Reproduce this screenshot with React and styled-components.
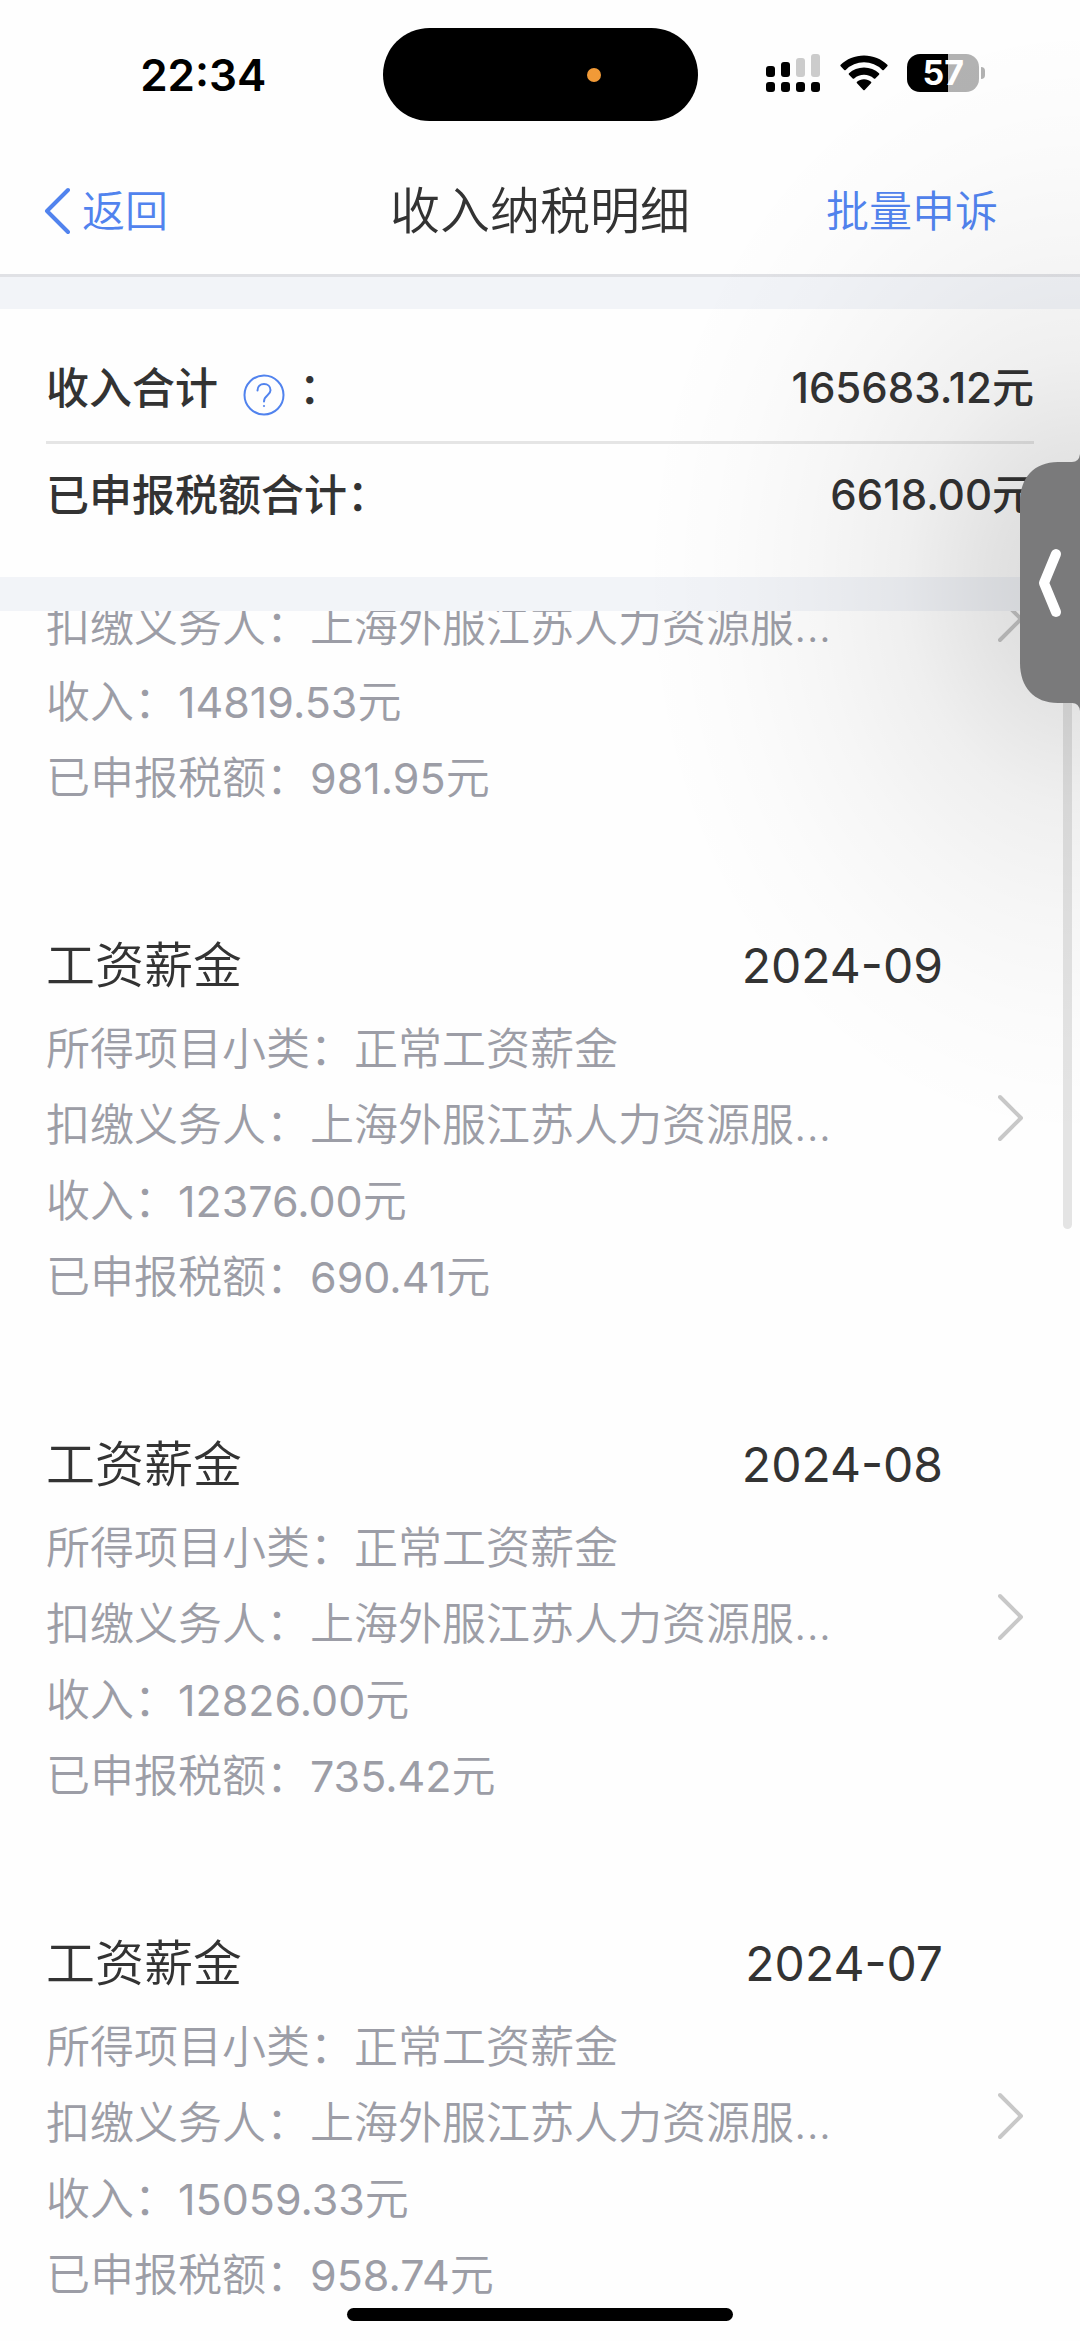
import React, { useLayoutEffect, useRef } from "react"
import styled, { createGlobalStyle } from "styled-components"

const GlobalStyle = createGlobalStyle`
  * {
    box-sizing: border-box;
  }

  body {
    margin: 0;
    background: #fefefe;
    color: #333;
    font-family: Inter, "Noto Sans CJK SC", sans-serif;
  }

  h1, h2, p, dl, dt, dd, ul {
    margin: 0;
    padding: 0;
    font-size: inherit;
    font-weight: inherit;
  }

  button {
    border: 0;
    padding: 0;
    background: none;
    color: inherit;
    font: inherit;
    cursor: pointer;
  }

  svg {
    display: block;
  }
`

const Screen = styled.div`
  position: relative;
  display: flex;
  flex-direction: column;
  height: 100vh;
  overflow: hidden;
`

const StatusBar = styled.div`
  display: grid;
  grid-template-columns: 1fr 315px 1fr;
  align-items: center;
  padding: 28px 0 21px;
`

const Clock = styled.time`
  padding-left: 24px;
  color: #000;
  font-size: 44px;
  font-weight: 600;
  line-height: 56px;
  text-align: center;
`

const Island = styled.div`
  display: flex;
  align-items: center;
  justify-content: flex-end;
  height: 93px;
  padding-right: 97px;
  border-radius: 48px;
  background: #000;
`

const MicDot = styled.span`
  width: 14px;
  height: 14px;
  border-radius: 50%;
  background: #f19a37;
`

const StatusIcons = styled.div`
  display: flex;
  align-items: center;
  justify-content: center;
  gap: 19px;
  padding: 0 26px 4px 0;
`

const Battery = styled.div`
  display: flex;
  align-items: center;
  gap: 2px;

  span {
    width: 72px;
    height: 38px;
    border-radius: 13px;
    background: linear-gradient(90deg, #000 57%, #b2b2b2 57%);
    color: #fff;
    font-size: 34px;
    font-weight: 700;
    line-height: 38px;
    text-align: center;
  }

  &::after {
    content: "";
    width: 4px;
    height: 12px;
    border-radius: 0 4px 4px 0;
    background: #b2b2b2;
  }
`

const NavBar = styled.header`
  display: grid;
  grid-template-columns: 1fr auto 1fr;
  align-items: center;
  height: 135px;
  padding-top: 6px;
  border-bottom: 3px solid #e0e1e5;

  h1 {
    font-size: 50px;
    font-weight: 350;
    line-height: 64px;
  }
`

const NavButton = styled.button`
  && {
    display: flex;
    align-items: center;
    justify-self: ${props => props.side};
    gap: 12px;
    padding: 0 82px 0 44px;
    color: #5183ee;
    font-size: 43px;
    font-weight: 350;
    line-height: 56px;
  }
`

const Band = styled.div`
  flex: none;
  height: ${props => props.size}px;
  background: #f2f4f8;
`

const Summary = styled.dl`
  padding: 51px 46px 54px;
  font-size: 43px;
  font-weight: 500;
  line-height: 56px;
`

const SummaryRow = styled.div`
  display: flex;
  justify-content: space-between;

  & + & {
    margin-top: 25px;
    padding-top: 23px;
    border-top: 3px solid #e5e5e5;
  }

  dt {
    display: flex;
  }

  dd {
    font-size: 42px;
  }
`

const HelpButton = styled.button`
  && {
    align-self: flex-end;
    margin: 0 14px 0 25px;
  }
`

const Records = styled.ul`
  flex: 1;
  min-height: 0;
  overflow-y: auto;
  scrollbar-width: none;
  list-style: none;
`

const Record = styled.li`
  display: flex;
  align-items: center;
  padding: 51px 56px 54px 46px;
`

const RecordBody = styled.div`
  flex: 1;
  min-width: 0;
`

const RecordHead = styled.div`
  display: flex;
  justify-content: space-between;
  font-size: 49px;
  font-weight: 350;
  line-height: 90px;

  time {
    font-size: 48px;
    font-weight: 400;
  }
`

const Field = styled.p`
  color: #9c9da6;
  font-size: 44px;
  font-weight: 350;
  line-height: 76px;
  white-space: nowrap;
`

const Digits = styled.span`
  font-size: 43px;
  font-weight: 400;
`

const OpenButton = styled.button`
  && {
    margin-left: 55px;
  }
`

const ScrollThumb = styled.div`
  position: absolute;
  top: 620px;
  right: 8px;
  width: 9px;
  height: 609px;
  border-radius: 5px;
  background: #e4e4e4;
`

const Shade = styled.div`
  position: absolute;
  inset: 0;
  background: radial-gradient(
    440px 560px at 100% 582px,
    rgba(0, 0, 0, 0.15),
    rgba(0, 0, 0, 0.11) 20%,
    rgba(0, 0, 0, 0.06) 40%,
    rgba(0, 0, 0, 0.03) 60%,
    rgba(0, 0, 0, 0.01) 80%,
    rgba(0, 0, 0, 0)
  );
  pointer-events: none;
`

const SideTab = styled.button`
  && {
    position: absolute;
    top: 454px;
    right: 0;
  }
`

const HomeIndicator = styled.div`
  position: absolute;
  bottom: 20px;
  left: 50%;
  width: 386px;
  height: 13px;
  border-radius: 7px;
  background: #000;
  transform: translateX(-50%);
`

const SignalIcon = () => (
  <svg width="55" height="38" viewBox="0 0 55 38">
    <rect x="0" y="12" width="9" height="11" rx="3" />
    <rect x="15" y="8" width="9" height="15" rx="3" />
    <rect x="30" y="4" width="9" height="19" rx="3" fill="#ccc" />
    <rect x="45" y="0" width="9" height="23" rx="3" fill="#ccc" />
    <rect x="0" y="28" width="9" height="10" rx="3" />
    <rect x="15" y="28" width="9" height="10" rx="3" />
    <rect x="30" y="28" width="9" height="10" rx="3" />
    <rect x="45" y="28" width="9" height="10" rx="3" />
  </svg>
)

const WifiIcon = () => (
  <svg width="48" height="36" viewBox="0 0 48 36">
    <path d="M24 0.5C33 0.5 41.500 4 47.300 9.800Q48 10.500 47.300 11.200L43.800 14.900Q43 15.600 42.300 14.900A26 26 0 0 0 5.700 14.900Q5 15.600 4.200 14.900L0.700 11.200Q0 10.500 0.700 9.800C6.500 4 15 0.500 24 0.500Z" />
    <path d="M24 12.500C29.800 12.500 35 14.700 39 18.300Q39.800 19 39 19.800L35.300 23.500Q34.600 24.200 33.800 23.500A14.800 14.800 0 0 0 14.200 23.500Q13.400 24.200 12.700 23.500L9 19.800Q8.200 19 9 18.300C13 14.700 18.200 12.500 24 12.500Z" />
    <path d="M24 24.300C26.800 24.300 29.200 25.300 31 26.800Q31.800 27.500 31 28.300L24.700 35Q24 35.700 23.300 35L17 28.300Q16.200 27.500 17 26.800C18.800 25.300 21.200 24.300 24 24.300Z" />
  </svg>
)

const BackIcon = () => (
  <svg width="26" height="48" viewBox="0 0 26 48" fill="none">
    <path
      d="M24 3L3 24L24 45"
      stroke="#5183ee"
      strokeWidth="4"
      strokeLinecap="round"
      strokeLinejoin="round"
    />
  </svg>
)

const HelpIcon = () => (
  <svg width="42" height="42" viewBox="0 0 42 42" fill="none" stroke="#5183ee">
    <circle cx="21" cy="21" r="19.500" strokeWidth="2" />
    <path
      d="M14.500 16.500C14.500 12.500 17.300 10 21 10S27.500 12.600 27.500 16.200C27.500 21.500 21 21 21 27.500"
      strokeWidth="2"
      strokeLinecap="round"
    />
    <circle cx="21" cy="32" r="0.700" />
  </svg>
)

const OpenIcon = () => (
  <svg width="26" height="48" viewBox="0 0 26 48" fill="none">
    <path
      d="M2 3L23 24L2 45"
      stroke="#c8c8c8"
      strokeWidth="4"
      strokeLinecap="round"
      strokeLinejoin="round"
    />
  </svg>
)

const TabIcon = () => (
  <svg width="60" height="257" viewBox="0 0 60 257" fill="none">
    <path
      d="M60 0Q59 8 52 8H38C14 8 0 24 0 48V209C0 233 14 249 38 249H52Q59 249 60 257Z"
      fill="#7a7a7b"
    />
    <path
      d="M36 100L24 129L36 158"
      stroke="#fff"
      strokeWidth="10"
      strokeLinecap="round"
      strokeLinejoin="round"
    />
  </svg>
)

const records = [
  { month: "2024-10", income: "14819.53", tax: "981.95" },
  { month: "2024-09", income: "12376.00", tax: "690.41" },
  { month: "2024-08", income: "12826.00", tax: "735.42" },
  { month: "2024-07", income: "15059.33", tax: "958.74" }
]

const App = () => {
  const list = useRef(null)

  useLayoutEffect(() => {
    list.current.scrollTop = 240
  }, [])

  return (
    <Screen>
      <GlobalStyle />
      <StatusBar>
        <Clock>22:34</Clock>
        <Island>
          <MicDot />
        </Island>
        <StatusIcons>
          <SignalIcon />
          <WifiIcon />
          <Battery>
            <span>57</span>
          </Battery>
        </StatusIcons>
      </StatusBar>
      <NavBar>
        <NavButton side="start">
          <BackIcon />
          返回
        </NavButton>
        <h1>收入纳税明细</h1>
        <NavButton side="end">批量申诉</NavButton>
      </NavBar>
      <Band size={32} />
      <Summary>
        <SummaryRow>
          <dt>
            收入合计
            <HelpButton aria-label="收入合计说明">
              <HelpIcon />
            </HelpButton>
            ：
          </dt>
          <dd>165683.12元</dd>
        </SummaryRow>
        <SummaryRow>
          <dt>已申报税额合计：</dt>
          <dd>6618.00元</dd>
        </SummaryRow>
      </Summary>
      <Band size={34} />
      <Records ref={list}>
        {records.map(({ month, income, tax }) => (
          <Record key={month}>
            <RecordBody>
              <RecordHead>
                <h2>工资薪金</h2>
                <time>{month}</time>
              </RecordHead>
              <Field>所得项目小类：正常工资薪金</Field>
              <Field>扣缴义务人：上海外服江苏人力资源服...</Field>
              <Field>
                收入：<Digits>{income}</Digits>元
              </Field>
              <Field>
                已申报税额：<Digits>{tax}</Digits>元
              </Field>
            </RecordBody>
            <OpenButton aria-label={`${month} 详情`}>
              <OpenIcon />
            </OpenButton>
          </Record>
        ))}
      </Records>
      <ScrollThumb />
      <Shade />
      <SideTab aria-label="展开">
        <TabIcon />
      </SideTab>
      <HomeIndicator />
    </Screen>
  )
}

export default App
